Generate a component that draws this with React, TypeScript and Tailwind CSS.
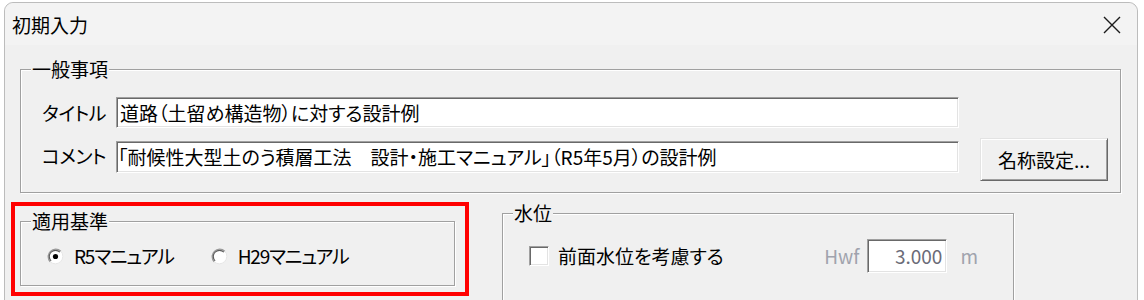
import React from "react";

const sunken =
  "border border-t-[#a0a0a0] border-l-[#a0a0a0] border-r-white border-b-white shadow-[inset_1px_1px_0_#696969,inset_-1px_-1px_0_#e3e3e3] bg-white";
const etched = "border border-[#a0a0a0] shadow-[inset_1px_1px_0_#fff,1px_1px_0_#fff]";

function Radio({ checked }: { checked?: boolean }) {
  return (
    <svg width="17" height="17" viewBox="0 0 17 17" className="shrink-0">
      <circle cx="8.5" cy="8.5" r="7.5" fill="#fff" />
      <path d="M3.2 13.8 A7.5 7.5 0 0 1 13.8 3.2" stroke="#9a9a9a" strokeWidth="1.3" fill="none" />
      <path d="M4.1 12.9 A6.2 6.2 0 0 1 12.9 4.1" stroke="#5e5e5e" strokeWidth="1.2" fill="none" />
      <path d="M13.8 3.2 A7.5 7.5 0 0 1 3.2 13.8" stroke="#e6e6e6" strokeWidth="1" fill="none" />
      {checked && <circle cx="8.5" cy="8.5" r="2.6" fill="#000" />}
    </svg>
  );
}

function GroupBox({ label, className, children }: { label: string; className?: string; children: React.ReactNode }) {
  return (
    <fieldset className={etched + " " + (className || "")}>
      <legend className="ml-[10px] px-[1px] h-[20px] leading-[20px] bg-[#f0f0f0]">{label}</legend>
      {children}
    </fieldset>
  );
}

export default function App() {
  return (
    <div className="w-[1144px] h-[300px] overflow-hidden bg-white text-[19px] text-black font-['Noto_Sans_CJK_JP','Noto_Sans',sans-serif] [font-feature-settings:'palt']">
      <div className="ml-[4px] mt-[2px] w-[1134px] h-[320px] border border-[#bcbcbc] rounded-t-[9px] bg-[#f0f0f0]">
        {/* title bar */}
        <div className="h-[42px] flex items-center justify-between pl-[7px] pr-[16px] bg-[#f3f3f3] rounded-t-[9px]">
          <span className="leading-[20px] mt-[1px]">初期入力</span>
          <svg width="18" height="18" viewBox="0 0 18 18" className="mt-[2px]">
            <path d="M1 1 L17 17 M17 1 L1 17" stroke="#1b1b1b" strokeWidth="1.4" />
          </svg>
        </div>

        {/* 一般事項 */}
        <GroupBox label="一般事項" className="ml-[15px] mt-[14px] w-[1101px] pb-[11px]">
          <div className="mt-[18px] flex items-center">
            <span className="w-[85px] text-right leading-[20px] tracking-[-0.5px]">タイトル</span>
            <div className={sunken + " ml-[10px] w-[843px] h-[31px] flex items-center pl-[3px]"}>
              <span className="leading-[20px]">道路（土留め構造物）に対する設計例</span>
            </div>
          </div>
          <div className="mt-[10px] flex items-start">
            <span className="w-[85px] text-right leading-[20px] mt-[8px] tracking-[-0.5px]">コメント</span>
            <div className={sunken + " ml-[10px] mt-[3px] w-[843px] h-[32px] flex items-center pl-[1px]"}>
              <span className="leading-[20px] whitespace-pre">「耐候性大型土のう積層工法　設計・施工マニュアル」（R5年5月）の設計例</span>
            </div>
            <button className="ml-[21px] w-[128px] h-[43px] bg-[#f0f0f0] border border-t-[#e3e3e3] border-l-[#e3e3e3] border-r-[#696969] border-b-[#696969] shadow-[inset_1px_1px_0_#fff,inset_-1px_-1px_0_#a0a0a0] flex items-center justify-center">
              <span className="leading-[20px]">名称設定...</span>
            </button>
          </div>
        </GroupBox>

        <div className="flex items-start">
          {/* red highlight around 適用基準 */}
          <div className="ml-[6px] mt-[9px] w-[458px] border-4 border-[#ff0000] pt-[5px] pb-[6px]">
            <GroupBox label="適用基準" className="ml-[5px] w-[435px] h-[75px]">
              <div className="mt-[15px] pl-[26px] flex items-center h-[20px]">
                <Radio checked />
                <span className="ml-[10px] leading-[20px] tracking-[-1.2px]">R5マニュアル</span>
                <span className="ml-[37px]">
                  <Radio />
                </span>
                <span className="ml-[10px] leading-[20px] tracking-[-1.2px]">H29マニュアル</span>
              </div>
            </GroupBox>
          </div>

          {/* 水位 */}
          <GroupBox label="水位" className="ml-[33px] mt-[10px] w-[512px] h-[100px]">
            <div className="mt-[16px] pl-[26px] pr-[35px] flex items-center">
              <span className={sunken + " w-[20px] h-[20px] shrink-0"} />
              <span className="ml-[9px] leading-[20px]">前面水位を考慮する</span>
              <span className="ml-auto text-[#a0a3ad] leading-[20px]">Hwf</span>
              <div className={sunken + " ml-[8px] w-[80px] h-[34px] flex items-center justify-end pr-[4px]"}>
                <span className="text-[#6b6b78] leading-[20px]">3.000</span>
              </div>
              <span className="ml-[13px] text-[#a0a3ad] leading-[20px]">m</span>
            </div>
          </GroupBox>
        </div>
      </div>
    </div>
  );
}
